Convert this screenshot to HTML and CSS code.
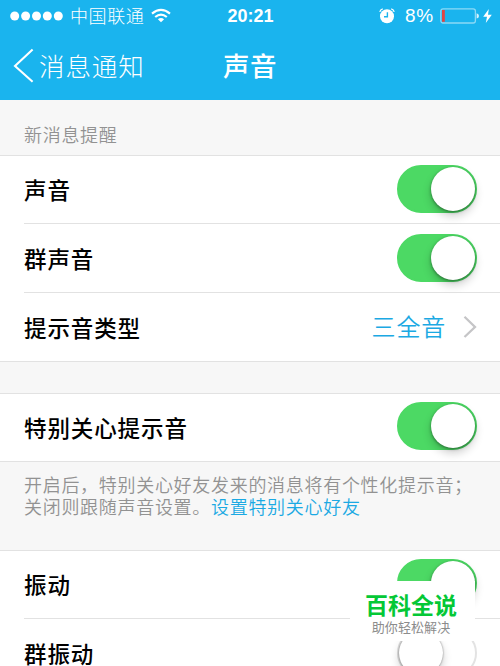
FILE: index.html
```html
<!DOCTYPE html>
<html lang="zh-CN">
<head>
<meta charset="utf-8">
<title>声音</title>
<link rel="stylesheet" href="styles.css">
</head>
<body>
<div class="screen">
  <header class="header">
    <div class="status">
      <div class="status-left">
        <svg class="signal" width="54" height="10" viewBox="0 0 54 10" fill="#fff"><circle cx="4.7" cy="5" r="4.5"/><circle cx="15.6" cy="5" r="4.5"/><circle cx="26.5" cy="5" r="4.5"/><circle cx="37.3" cy="5" r="4.5"/><circle cx="48.3" cy="5" r="4.5"/></svg>
        <span class="carrier">中国联通</span>
        <svg class="wifi" width="20" height="16" viewBox="0 0 20 16" fill="none" stroke="#fff" stroke-width="2.2"><path d="M1 5.6Q10-1.8 19 5.6"/><path d="M4.2 9Q10 4.2 15.8 9"/><path d="M10 14.2L6.9 11.2Q10 8.6 13.1 11.2Z" fill="#fff" stroke="none"/></svg>
      </div>
      <span class="time">20:21</span>
      <div class="status-right">
        <svg class="alarm" width="16" height="16" viewBox="0 0 16 16"><circle cx="8" cy="8.2" r="7" fill="#fff"/><path d="M.8 3.8Q1.4 1.5 3.8.9M15.2 3.8Q14.6 1.5 12.2.9" fill="none" stroke="#fff" stroke-width="1.3"/><path d="M8.4 4.2V8.7H5" fill="none" stroke="#1ab4ee" stroke-width="1.4"/></svg>
        <span class="percent">8%</span>
        <svg class="battery" width="40" height="16" viewBox="0 0 40 16"><rect x=".8" y=".8" width="34.6" height="14.2" rx="2.2" fill="none" stroke="#8cd9f6" stroke-width="1.3"/><rect x="2" y="2" width="2.8" height="11.8" fill="#e34442"/><path d="M36.6 5.3Q39 5.8 39 8T36.6 10.6Z" fill="#d7f2fd"/></svg>
        <svg class="bolt" width="9" height="14" viewBox="0 0 9 14"><path d="M5.8 0L.2 7.8H4L2.8 14L8.8 5.8H5Z" fill="#fff"/></svg>
      </div>
    </div>
    <nav class="nav">
      <a class="back"><svg width="21" height="36" viewBox="0 0 21 36"><path d="M19.6 1.5L2 18L19.6 33.8" fill="none" stroke="#fff" stroke-width="2.1"/></svg><span>消息通知</span></a>
      <h1 class="title">声音</h1>
    </nav>
  </header>
  <h2 class="section-title">新消息提醒</h2>
  <section class="group">
    <div class="row"><span class="label">声音</span><span class="switch on"><i class="knob"></i></span></div>
    <div class="row"><span class="label">群声音</span><span class="switch on"><i class="knob"></i></span></div>
    <div class="row"><span class="label">提示音类型</span><span class="value">三全音</span><svg class="chevron" width="14" height="24" viewBox="0 0 14 24"><path d="M1.5 1.8L12 12L1.5 22" fill="none" stroke="#c5c5c7" stroke-width="2.3"/></svg></div>
  </section>
  <section class="group care">
    <div class="row"><span class="label">特别关心提示音</span><span class="switch on"><i class="knob"></i></span></div>
  </section>
  <p class="note">开启后，特别关心好友发来的消息将有个性化提示音；<br>关闭则跟随声音设置。<a class="link">设置特别关心好友</a></p>
  <section class="group vibrate">
    <div class="row"><span class="label">振动</span><span class="switch on"><i class="knob"></i></span></div>
    <div class="row"><span class="label">群振动</span><span class="switch"><i class="knob"></i></span></div>
  </section>
  <aside class="badge"><strong>百科全说</strong><span>助你轻松解决</span></aside>
</div>
</body>
</html>
```
FILE: styles.css
```css
* { box-sizing: border-box; }
body { margin: 0; overflow: hidden; }
.screen {
  position: relative;
  width: 500px;
  height: 666px;
  overflow: hidden;
  background: #f7f7f7;
  font-family: "Noto Sans CJK SC", sans-serif;
  color: #000;
  white-space: nowrap;
}
.header { height: 100px; background: #1ab4ee; color: #fff; }
.status {
  display: grid;
  grid-template-columns: 1fr auto 1fr;
  align-items: center;
  height: 32px;
  padding: 0 8px 0 10px;
}
.status-left, .status-right { display: flex; align-items: center; }
.status-right { justify-content: flex-end; }
.carrier { margin-left: 6px; padding-bottom: 1px; font-size: 18px; font-weight: 300; letter-spacing: .6px; line-height: 31px; }
.wifi { margin-left: 7px; }
.time { font: bold 18px "Liberation Sans", sans-serif; margin-right: 1px; }
.percent { margin: 0 6px 0 10px; font: 19px "Liberation Sans", sans-serif; letter-spacing: .8px; }
.bolt { margin-left: 3px; }
.nav { display: grid; grid-template-columns: 1fr auto 1fr; align-items: center; height: 68px; padding: 0 13px 3px; }
.back { display: flex; align-items: center; gap: 5px; font-size: 25.5px; font-weight: 300; letter-spacing: .9px; }
.back svg { margin-top: 2px; }
.back span { padding-bottom: 1px; }
.title { margin: 0; font-size: 26.5px; font-weight: 500; letter-spacing: .5px; }
.section-title {
  height: 55px;
  margin: 0;
  padding: 13px 24px 0;
  color: #929292;
  font-size: 18px;
  font-weight: 350;
  letter-spacing: .7px;
  line-height: 42px;
}
.group { padding-left: 24px; background: #fff; border-top: 1px solid #e2e2e2; border-bottom: 1px solid #e2e2e2; }
.row { display: flex; align-items: center; height: 67px; padding-right: 23px; }
.row + .row { height: 69px; border-top: 1px solid #e2e2e2; }
.label { flex: 1; padding-bottom: 2px; font-size: 22.5px; font-weight: 500; letter-spacing: .9px; }
.row + .row .label { padding-bottom: 1px; }
.value { padding-bottom: 4px; color: #1ba9e3; font-size: 24px; font-weight: 350; letter-spacing: .8px; margin-right: 17px; }
.switch { width: 80px; height: 48px; border-radius: 24px; border: 2px solid #e3e3e3; background: #fff; margin-bottom: 1px; }
.care .switch, .vibrate .switch.on { margin-bottom: 3px; }
.knob { display: block; width: 44px; height: 44px; border-radius: 50%; background: #fff; box-shadow: 0 0 2px rgba(0,0,0,.5), 0 5px 10px rgba(0,0,0,.2); }
.switch.on { border-color: #4cd964; background: #4cd964; }
.on .knob { margin-left: 32px; box-shadow: 0 1px 3px rgba(0,0,0,.4), 0 5px 10px rgba(0,0,0,.2); }
.care { margin-top: 31px; }
.note { height: 88px; margin: 0; padding: 11px 24px 0; color: #929292; font-size: 18px; font-weight: 350; letter-spacing: .7px; line-height: 22px; }
.link { color: #1ba9e3; }
.badge {
  position: absolute;
  left: 350px;
  top: 581px;
  width: 125px;
  height: 60px;
  padding: 8px 3px 0 0;
  display: flex;
  flex-direction: column;
  align-items: center;
  background: #fff;
  color: #8c8c8c;
  font-size: 13px;
  letter-spacing: .1px;
}
.badge strong { color: #04c836; font-size: 23px; font-weight: 700; line-height: 31px; letter-spacing: 0; }
.badge span { line-height: 13px; }
```
